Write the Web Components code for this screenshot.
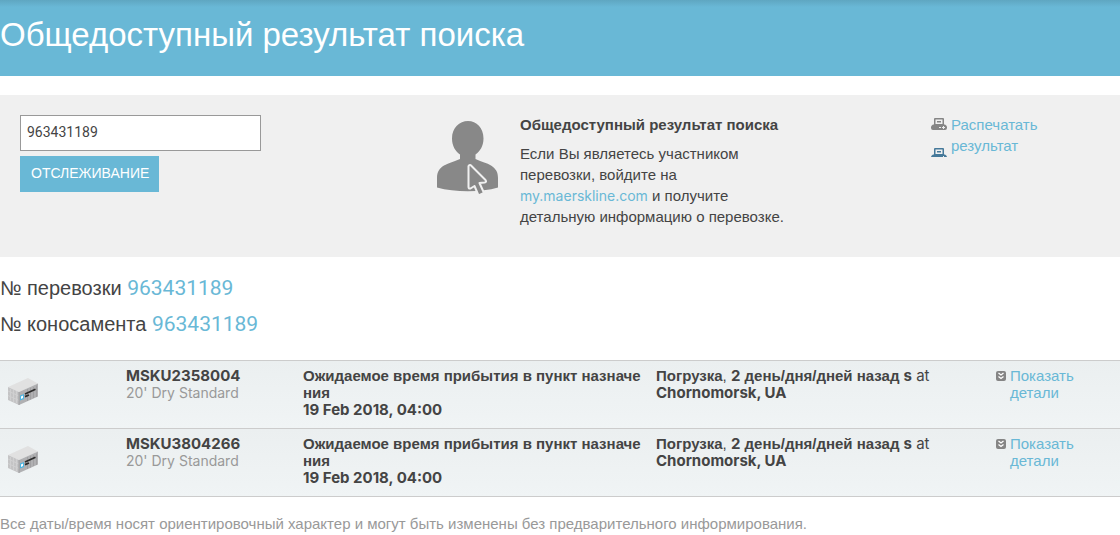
<!DOCTYPE html>
<html lang="ru">
<head>
<meta charset="utf-8">
<meta name="viewport" content="width=device-width, initial-scale=1">
<title>Общедоступный результат поиска</title>
<style>
body { margin: 0; background: #fff; color: #444; font: 15px/21px "Liberation Sans", Arial, sans-serif;
  --accent: #69b8d6; --muted: #999; --latin: Inter, sans-serif; }
</style>
</head>
<body>
<tracking-page></tracking-page>
<script>
const define = (name, html, setup) => {
  const template = document.createElement('template');
  template.innerHTML = html;
  customElements.define(name, class extends HTMLElement {
    connectedCallback() {
      if (this.shadowRoot) return;
      this.attachShadow({ mode: 'open' }).append(template.content.cloneNode(true));
      if (setup) setup(this, this.shadowRoot);
    }
  });
};

define('page-banner', `
<style>
:host { display: block; background: linear-gradient(#5fa6c1, var(--accent) 7px); color: #fff; }
h1 { margin: 0; padding: 15px 0 21px; font-size: 33px; line-height: 40px; font-weight: 400; }
</style>
<h1><slot></slot></h1>`);

define('user-icon', `
<style>:host { display: block; } svg { display: block; }</style>
<svg width="62" height="75" viewBox="0 0 62 75" aria-hidden="true">
<path fill="#888" d="M31 0C39.500 0 46.500 6.500 46.500 17.500C46.500 25 43 30.500 38.500 33.500V38C45 41 50 42 54 44.500C59 48 61 51 61 57V66.500C44 71.500 18 71.500 0 66.500V57C0 51 2.500 47 7 44.500C12 42 17 40.500 23 38V33.500C18.500 30.500 15 25 15 17.500C15 6.500 22.500 0 31 0Z"/>
<path fill="#888" stroke="#f0f0f0" stroke-width="2" stroke-linejoin="round" d="M31.500 45Q33 43 34.500 45L48.500 59Q50 61 47.500 61.500L42.500 62L47 72L41.500 74.500L37.500 65L33.500 67.500Q31.500 68 31.500 66Z"/>
</svg>`);

define('printer-icon', `
<style>:host { display: block; color: #858585; } :host([cropped]) { color: #45799a; } svg { display: block; }
:host([cropped]) svg { height: 9px; }</style>
<svg width="16" height="12" viewBox="0 0 16 12" preserveAspectRatio="xMidYMin slice" aria-hidden="true">
<path fill="currentColor" fill-rule="evenodd" d="M3 1Q3 0 4 0H12Q13 0 13 1V6.500H14Q16 7.500 16 9V10Q16 12 14 12H2Q0 12 0 10V9Q0 7.500 2 6.500H3ZM4.500 1.500V6H11.500V1.500Z"/>
<path fill="currentColor" d="M6 3H10V4.500H6Z"/><path fill="#eee" d="M8 9H10V10H8ZM12 8H13V9H14V10H13V11H12V10H11V9H12Z"/>
</svg>`);

define('tracking-form', `
<style>
:host { display: block; padding-top: 1px; }
form { display: flex; flex-direction: column; align-items: flex-start; gap: 5px; margin: 0; }
input { box-sizing: border-box; width: 241px; max-width: 100%; height: 36px; padding: 0 6px 2px; border: 1px solid #999; border-radius: 0;
  background: #fff; color: #444; font: 14px Roboto, sans-serif; outline: 0; }
button { height: 36px; padding: 0 10px 2px 11px; border: 0; background: var(--accent); color: #fff; font: 14px "Liberation Sans", Arial, sans-serif; }
</style>
<form onsubmit="return false">
<input type="text" aria-label="Номер перевозки" value="963431189">
<button type="submit">ОТСЛЕЖИВАНИЕ</button>
</form>`);

define('login-note', `
<style>
:host { display: grid; grid-template-columns: 62px minmax(0, 280px); column-gap: 21px; }
user-icon { padding-top: 7px; }
h2 { margin: 0 0 8px; font-size: 15px; line-height: 21px; }
p { margin: 0; }
a { color: var(--accent); text-decoration: none; font-family: var(--latin); font-size: 14px; line-height: 1px; }
</style>
<user-icon></user-icon>
<div><h2>Общедоступный результат поиска</h2>
<p>Если Вы являетесь участником<br>перевозки, войдите на<br><a href="#login">my.maerskline.com</a> и получите<br>детальную информацию о перевозке.</p></div>`);

define('print-link', `
<style>
:host { display: block; }
a { display: flex; gap: 4px; color: var(--accent); text-decoration: none; }
.icons { display: flex; flex-direction: column; gap: 18px; padding-top: 4px; }
</style>
<a href="#print"><span class="icons"><printer-icon></printer-icon><printer-icon cropped></printer-icon></span><span>Распечатать<br>результат</span></a>`);

define('search-panel', `
<style>
:host { display: grid; grid-template-columns: 417fr 494fr 169fr; margin-top: 19px; padding: 19px 20px 30px; background: #f0f0f0; }
tracking-form, login-note, print-link { min-width: 0; }
</style>
<tracking-form></tracking-form><login-note></login-note><print-link></print-link>`);

define('reference-line', `
<style>
:host { display: block; }
h2 { margin: 0; font-size: 20px; line-height: 36px; font-weight: 400; }
a { color: var(--accent); text-decoration: none; font-family: Roboto, sans-serif; font-size: 21px; line-height: 1px; }
</style>
<h2><slot></slot> <a href="#shipment"></a></h2>`,
(el, root) => { root.querySelector('a').textContent = el.getAttribute('number'); });

define('container-icon', `
<style>:host { display: block; } svg { display: block; }</style>
<svg width="30" height="28" viewBox="0 0 30 28" aria-hidden="true">
<path fill="#e1e1e1" d="M0 9L20 0L30 5.500L11 14Z"/>
<path fill="#c4c4c5" d="M0 9L11 14V27L0 22Z"/>
<path fill="#b0b0b2" d="M11 14L30 5.500V18.500L11 27Z"/>
<path stroke="#d0d0d1" stroke-width="1" fill="none" d="M2.500 11V22.500M5.500 12V24M8.500 13V25M0 13L11 18M0 17.500L11 22.500"/>
<path stroke="#a0a0a2" stroke-width="1" fill="none" d="M19.500 11V23M22.500 10V21.500M25.500 9V20M28.500 7.500V19M11 14V27"/>
<path fill="#4db5e2" d="M12 17.500L16 16V21L12 22.500Z"/><path fill="#fff" d="M13 18.500L15 17.500V20L13 21Z"/>
<path stroke="#2c2c2c" stroke-width="1.800" fill="none" d="M17 16L27.500 11.200M17 18.700L21 17"/>
</svg>`);

define('expand-icon', `
<style>:host { display: block; } svg { display: block; }</style>
<svg width="10" height="10" viewBox="0 0 10 10" aria-hidden="true">
<rect width="10" height="10" rx="2" fill="#858585"/>
<path fill="none" stroke="#fff" stroke-width="1.300" d="M2.500 2L5 4L7.500 2M2.500 5.500L5 7.500L7.500 5.500"/>
</svg>`);

define('container-table', `
<style>
:host { display: block; margin-top: 18px; }
table { width: 100%; table-layout: fixed; border-collapse: separate; border-spacing: 0; border-top: 1px solid #ccc; line-height: 17px; }
.c1 { width: 126px; } .c2 { width: 177px; } .c3 { width: 353px; } .c5 { width: 124px; }
tr { background: linear-gradient(#ebeff0, #f0f4f5); }
td { padding: 6px 0 10px; border-bottom: 1px solid #ccc; vertical-align: top; text-align: left; }
.l { font-family: var(--latin); line-height: 1px; }
.type { color: var(--muted); font-size: 14px; }
container-icon { padding: 11px 0 0 8px; }
a { display: flex; gap: 4px; color: var(--accent); text-decoration: none; }
expand-icon { padding-top: 4px; }
</style>
<table><colgroup><col class="c1"><col class="c2"><col class="c3"><col><col class="c5"></colgroup><tbody></tbody></table>`,
(el, root) => {
  root.querySelector('tbody').innerHTML = el.getAttribute('numbers').split(' ').map(n => `<tr>
<td><container-icon></container-icon></td>
<td><b class="l">${n}</b><br><span class="l type">20' Dry Standard</span></td>
<td><b>Ожидаемое время прибытия в пункт назначе<br>ния</b><br><b class="l">19 Feb 2018, 04:00</b></td>
<td><b>Погрузка</b>, <b><span class="l">2</span> день/дня/дней назад <span class="l">s</span></b> <span class="l">at</span><br><b class="l">Chornomorsk, UA</b></td>
<td><a href="#details"><expand-icon></expand-icon><span>Показать<br>детали</span></a></td></tr>`).join('');
});

define('tracking-page', `
<style>
:host { display: block; }
.refs { padding-top: 13px; }
footer { padding-top: 16px; color: var(--muted); }
</style>
<header><page-banner>Общедоступный результат поиска</page-banner></header>
<main><search-panel></search-panel>
<div class="refs"><reference-line number="963431189">№ перевозки</reference-line><reference-line number="963431189">№ коносамента</reference-line></div>
<container-table numbers="MSKU2358004 MSKU3804266"></container-table></main>
<footer>Все даты/время носят ориентировочный характер и могут быть изменены без предварительного информирования.</footer>`);
</script>
</body>
</html>
